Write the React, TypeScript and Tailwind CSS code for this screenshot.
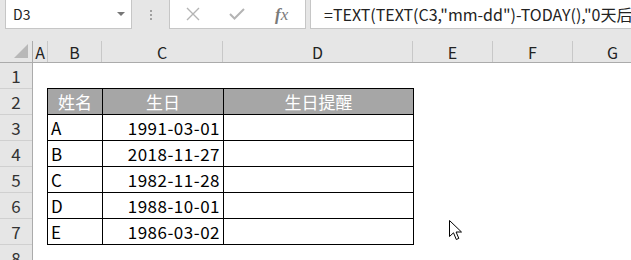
const font = { fontFamily: '"Noto Sans CJK SC", "Noto Sans", sans-serif' };

const cols = [
  { name: 'A', w: 15 },
  { name: 'B', w: 54 },
  { name: 'C', w: 121 },
  { name: 'D', w: 190 },
  { name: 'E', w: 80 },
  { name: 'F', w: 80 },
  { name: 'G', w: 80 },
];

const people = [
  ['A', '1991-03-01'],
  ['B', '2018-11-27'],
  ['C', '1982-11-28'],
  ['D', '1988-10-01'],
  ['E', '1986-03-02'],
];

function Cursor() {
  return (
    <svg width="14" height="22" viewBox="0 0 14 22" className="absolute left-[449px] top-[220px]">
      <path
        d="M0.5 0.5 L0.5 16.5 L4.5 12.8 L7.3 19.5 L9.8 18.4 L7.1 12 L12.5 12 Z"
        fill="#fff"
        stroke="#000"
        strokeWidth="1"
        strokeLinejoin="miter"
      />
    </svg>
  );
}

export default function App() {
  return (
    <div className="relative w-[631px] h-[260px] overflow-hidden bg-white" style={font}>
      {/* Formula bar */}
      <div className="h-[41px] bg-[#e6e6e6] flex items-start">
        <div className="ml-[5px] w-[127px] h-[29px] bg-white border-x border-b border-[#c6c6c6] flex items-center justify-between pl-[7px] pr-[6px]">
          <span className="text-[14px] text-[#222] leading-none">D3</span>
          <span className="w-0 h-0 border-l-[4px] border-r-[4px] border-t-[4px] border-l-transparent border-r-transparent border-t-[#777]" />
        </div>
        <div className="w-[37px] h-[29px] flex flex-col items-center justify-center gap-[2px] pl-[1px]">
          <span className="w-[2px] h-[2px] bg-[#a0a0a0]" />
          <span className="w-[2px] h-[2px] bg-[#a0a0a0]" />
          <span className="w-[2px] h-[2px] bg-[#a0a0a0]" />
        </div>
        <div className="w-[137px] h-[29px] bg-white border-x border-b border-[#c6c6c6] flex items-center pl-[16px]">
          <svg width="14" height="14" viewBox="0 0 14 14">
            <path d="M1 1 L13 13 M13 1 L1 13" stroke="#b4b4b4" strokeWidth="1.4" />
          </svg>
          <svg width="16" height="12" viewBox="0 0 16 12" className="ml-[29px]">
            <path d="M1 6 L5.5 10.5 L15 1" stroke="#b4b4b4" strokeWidth="2" fill="none" />
          </svg>
          <span
            className="ml-[30px] text-[17px] italic text-[#7a7a7a] leading-none"
            style={{ fontFamily: '"Liberation Serif", serif' }}
          >
            <span className="font-bold">f</span>x
          </span>
        </div>
        <div className="ml-[4px] flex-1 h-[29px] bg-white border-l border-b border-[#c6c6c6] flex items-center pl-[13px] overflow-hidden whitespace-nowrap">
          <span className="text-[16px] text-[#222] leading-none">
            =TEXT(TEXT(C3,"mm-dd")-TODAY(),"0天后
          </span>
        </div>
      </div>

      {/* Column headers */}
      <div className="flex h-[22px] bg-[#e6e6e6] border-b border-[#ababab]">
        <div className="w-[33px] shrink-0 border-r border-[#ababab] relative">
          <span className="absolute right-[4px] bottom-[4px] w-0 h-0 border-l-[14px] border-b-[14px] border-l-transparent border-b-[#b8b8b8]" />
        </div>
        {cols.map((c) => (
          <div
            key={c.name}
            className="shrink-0 border-r border-[#c8c8c8] flex items-center justify-center text-[16px] text-[#222]"
            style={{ width: c.w }}
          >
            {c.name}
          </div>
        ))}
      </div>

      {/* Sheet body */}
      <div className="flex">
        <div className="w-[33px] shrink-0 bg-[#e6e6e6] border-r border-[#ababab]">
          {[1, 2, 3, 4, 5, 6, 7, 8].map((n) => (
            <div
              key={n}
              className="h-[26px] border-b border-[#d0d0d0] flex items-center justify-center text-[17px] text-[#333]"
            >
              {n}
            </div>
          ))}
        </div>
        <div className="pl-[14px] pt-[25px]">
          <table className="border-collapse text-[17px]">
            <thead>
              <tr className="bg-[#a6a6a6] text-white h-[26px]">
                <th className="border border-black font-normal w-[55px] text-center leading-none">姓名</th>
                <th className="border border-black font-normal w-[121px] text-center leading-none">生日</th>
                <th className="border border-black font-normal w-[190px] text-center leading-none">生日提醒</th>
              </tr>
            </thead>
            <tbody>
              {people.map(([n, d]) => (
                <tr key={n} className="h-[26px] text-black">
                  <td className="border border-black pl-[3px] leading-none">{n}</td>
                  <td className="border border-black pr-[3px] text-right leading-none tracking-[0.5px]">{d}</td>
                  <td className="border border-black" />
                </tr>
              ))}
            </tbody>
          </table>
        </div>
      </div>

      <Cursor />
    </div>
  );
}
